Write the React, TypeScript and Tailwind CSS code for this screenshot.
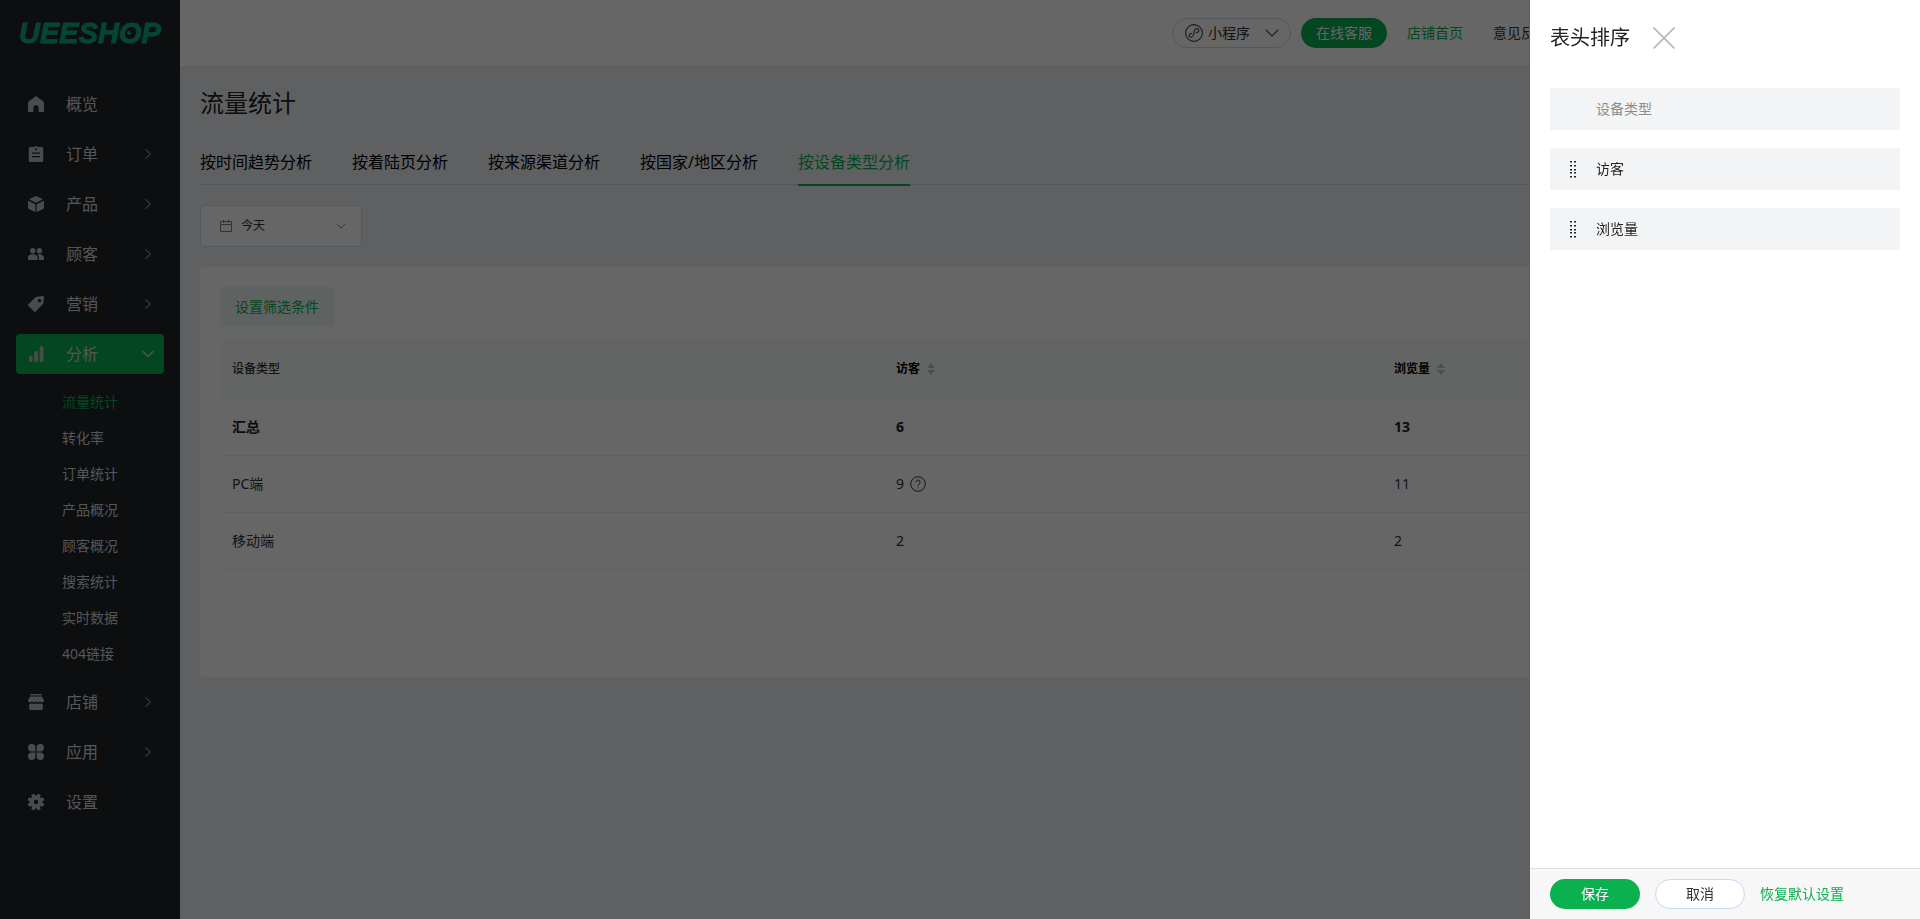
import { useState } from 'react'
import type { ReactNode } from 'react'
import { ChevronDown, ChevronRight } from 'lucide-react'

type MenuItem = {
  name: string
  icon: ReactNode
  arrow?: boolean
  children?: string[]
}

const svgProps = {
  viewBox: '0 0 16 16',
  fill: 'currentColor',
  className: 'w-4 h-4',
  'aria-hidden': true,
}

const menu: MenuItem[] = [
  {
    name: '概览',
    icon: (
      <svg {...svgProps}>
        <path d="M8 0 15.3 5.6c.4.3.7.8.7 1.3V15a1 1 0 0 1-1 1h-4.400v-4.200a2.600 2.600 0 0 0-5.200 0V16H1a1 1 0 0 1-1-1V6.900c0-.5.3-1 .7-1.300z" />
      </svg>
    ),
  },
  {
    name: '订单',
    arrow: true,
    icon: (
      <svg {...svgProps}>
        <path
          fillRule="evenodd"
          d="M5.400 1 8 0l2.600 1H14a1.200 1.200 0 0 1 1.200 1.200v12.600A1.200 1.200 0 0 1 14 16H2a1.200 1.200 0 0 1-1.200-1.200V2.200A1.200 1.200 0 0 1 2 1zM8 2.200a1 1 0 1 0 0 2 1 1 0 0 0 0-2zM4 6.500v1.300h8V6.500zM4 10v1.300h8V10z"
        />
      </svg>
    ),
  },
  {
    name: '产品',
    arrow: true,
    icon: (
      <svg {...svgProps}>
        <path d="M8 0 15 3.300 8 6.800 1 3.300zM0 4.700l7.400 3.600V16L.7 12.900a1.200 1.200 0 0 1-.7-1zM16 4.700 8.600 8.300V16l6.700-3.100a1.200 1.200 0 0 0 .7-1z" />
      </svg>
    ),
  },
  {
    name: '顾客',
    arrow: true,
    icon: (
      <svg {...svgProps}>
        <circle cx="4.800" cy="4.800" r="2.700" />
        <circle cx="11.400" cy="4.800" r="2.700" />
        <path d="M0 14v-2.200a4 4 0 0 1 4-3.600h1.400c2.300 0 4 1.500 4.400 3.600V14zM11 14v-2.200c-.1-1.300-.8-2.600-1.700-3.400.6-.2 1.200-.2 2.100-.2 2.600 0 4.300 1.400 4.600 3.600V14z" />
      </svg>
    ),
  },
  {
    name: '营销',
    arrow: true,
    icon: (
      <svg {...svgProps}>
        <path
          fillRule="evenodd"
          d="M8.700.7 15 0a1 1 0 0 1 1 1l-.6 6.300c0 .3-.2.600-.4.800l-7.300 7.500a1.200 1.200 0 0 1-1.700 0L.4 10a1.200 1.200 0 0 1 0-1.700L7.900 1.100c.2-.2.5-.4.8-.4zM11.400 3a1.800 1.800 0 1 0 0 3.600 1.800 1.800 0 0 0 0-3.600z"
        />
      </svg>
    ),
  },
  {
    name: '分析',
    icon: (
      <svg {...svgProps}>
        <rect x="1" y="9.500" width="3.600" height="6.500" rx="1.600" />
        <rect x="6.200" y="5" width="3.800" height="11" rx="1.600" />
        <rect x="11.700" y="0" width="3.800" height="16" rx="1.600" />
      </svg>
    ),
    children: ['流量统计', '转化率', '订单统计', '产品概况', '顾客概况', '搜索统计', '实时数据', '404链接'],
  },
  {
    name: '店铺',
    arrow: true,
    icon: (
      <svg {...svgProps}>
        <path d="M2.200 0h11.600v1.400H2.200zM2 2.600h12l2 4c0 1.100-.8 1.900-2 1.900s-1.700-.6-2-1.200c-.4.700-1 1.200-2 1.200S8.300 8 8 7.300C7.700 8 7 8.500 6 8.500S4.400 8 4 7.300c-.3.600-1 1.200-2 1.200S0 7.700 0 6.600zM1.200 9.900c1 .2 2 0 2.800-.6 1.200.8 2.800.8 4 0 1.200.8 2.800.8 4 0 .8.600 1.800.8 2.800.6V15a1 1 0 0 1-1 1H2.200a1 1 0 0 1-1-1z" />
      </svg>
    ),
  },
  {
    name: '应用',
    arrow: true,
    icon: (
      <svg {...svgProps}>
        <path d="M3.700 0a3.700 3.700 0 0 1 3.700 3.700v3.700H3.700a3.700 3.700 0 0 1 0-7.400zM12.300 0a3.700 3.700 0 0 1 0 7.400H8.600V3.700A3.700 3.700 0 0 1 12.300 0zM3.700 8.600h3.700v3.700a3.700 3.700 0 1 1-3.700-3.700zM8.600 8.600h3.700a3.700 3.700 0 1 1-3.700 3.700z" />
      </svg>
    ),
  },
  {
    name: '设置',
    icon: (
      <svg {...svgProps}>
        <circle cx="8" cy="8" r="4.300" fill="none" stroke="currentColor" strokeWidth="4.200" />
        {[22.5, 67.5, 112.5, 157.5, 202.5, 247.5, 292.5, 337.5].map((deg) => (
          <rect key={deg} x="6.300" y="-.4" width="3.400" height="3.400" rx=".8" transform={`rotate(${deg} 8 8)`} />
        ))}
      </svg>
    ),
  },
]

const tabs = ['按时间趋势分析', '按着陆页分析', '按来源渠道分析', '按国家/地区分析', '按设备类型分析']

const rows = [
  { type: 'PC端', visitors: 9, views: 11, tip: true },
  { type: '移动端', visitors: 2, views: 2, tip: false },
]

function Logo() {
  return (
    <svg viewBox="0 0 150 44" className="w-[150px] h-11" role="img" aria-label="UEESHOP">
      <text
        x="0"
        y="33"
        fill="#0cb080"
        stroke="#0cb080"
        strokeWidth=".8"
        fontFamily="'Liberation Sans', Arial, sans-serif"
        fontSize="29"
        fontWeight="700"
        fontStyle="italic"
      >
        UEESHOP
      </text>
      <circle cx="110" cy="23" r="2" fill="#0cb080" />
    </svg>
  )
}

function CalendarIcon() {
  return (
    <svg viewBox="0 0 12 12" className="w-3 h-3" fill="none" stroke="#7c818c" aria-hidden="true">
      <path d="M.5 1.500h11v10H.5zM.5 4.500h11M3.500 0v3M8.500 0v3" />
    </svg>
  )
}

function SortIcon() {
  return (
    <svg viewBox="0 0 8 12" className="w-2 h-3" fill="#c0c4cc" aria-hidden="true">
      <path d="M4 0 8 5H0zM4 12 0 7h8z" />
    </svg>
  )
}

function DragIcon() {
  return (
    <svg viewBox="0 0 6 17" className="w-[6px] h-[17px]" fill="#222" aria-hidden="true">
      {[0, 4, 8, 11, 15].map((y) => (
        <g key={y}>
          <rect x="0" y={y} width="2" height="1.500" />
          <rect x="4" y={y} width="2" height="1.500" />
        </g>
      ))}
    </svg>
  )
}

function Sidebar() {
  return (
    <aside className="w-[180px] shrink-0 bg-[#202328] text-[#d5d6d8]">
      <div className="h-[84px] pt-[10px] pl-[19px]">
        <Logo />
      </div>
      <nav className="px-4">
        <ul className="flex flex-col gap-[10px]">
          {menu.map((item) => (
            <li key={item.name}>
              <a
                href="#"
                className={
                  item.children
                    ? 'flex h-10 items-center rounded bg-[#0bb04f] pl-3 pr-[6px] text-base'
                    : 'flex h-10 items-center rounded pl-3 pr-[7px] text-base'
                }
              >
                <span className="text-[#b9bbbe]">{item.icon}</span>
                <span className="ml-[22px] flex-1">{item.name}</span>
                {item.arrow && <ChevronRight className="w-[18px] h-[18px] text-[#85878b]" strokeWidth={1.5} />}
                {item.children && <ChevronDown className="w-5 h-5" strokeWidth={1.5} />}
              </a>
              {item.children && (
                <ul className="pt-[10px] pl-[46px] text-sm">
                  {item.children.map((child, i) => (
                    <li key={child}>
                      <a
                        href="#"
                        className={
                          i === 0 ? 'flex h-9 items-center text-[#0bb04f]' : 'flex h-9 items-center'
                        }
                      >
                        {child}
                      </a>
                    </li>
                  ))}
                </ul>
              )}
            </li>
          ))}
        </ul>
      </nav>
    </aside>
  )
}

function Header() {
  return (
    <header className="flex h-[67px] items-center justify-end border-b border-[#e4e5e9] bg-white pr-[371px] text-sm">
      <button type="button" className="flex h-[30px] w-[119px] items-center rounded-full border border-[#ccdced] pl-3 text-[#333]">
        <svg viewBox="0 0 18 18" className="w-[18px] h-[18px]" fill="none" stroke="#444" strokeWidth="1.100" aria-hidden="true">
          <circle cx="9" cy="9" r="8.400" />
          <path
            strokeLinecap="round"
            d="M11.300 8.900c1.600-.4 2.600-1.400 2.400-2.700-.2-1.200-1.500-2-2.800-1.500C9.600 5.200 9.500 6.300 9.100 8l-.4 2c-.3 1.600-.9 2.900-2.300 3.200-1.200.2-2.200-.6-2.200-1.700 0-1.200 1-2 2.300-2.300"
          />
        </svg>
        <span className="ml-[5px]">小程序</span>
        <ChevronDown className="ml-[10px] w-6 h-6 text-[#66676b]" strokeWidth={1.25} />
      </button>
      <a href="#" className="ml-[10px] flex h-[30px] items-center rounded-full bg-[#0bb04f] px-[15px] text-white">
        在线客服
      </a>
      <a href="#" className="ml-5 text-[#0bb04f]">
        店铺首页
      </a>
      <a href="#" className="ml-[30px] text-[#333]">
        意见反馈
      </a>
    </header>
  )
}

function StatsTable() {
  return (
    <table className="mt-3 w-full table-fixed text-left text-sm text-[#333]">
      <thead className="text-xs">
        <tr className="h-[60px] bg-[#f8fcfa]">
          <th className="w-[40%] px-3 font-medium">设备类型</th>
          {['访客', '浏览量'].map((name) => (
            <th key={name} className="w-[30%] px-3 font-bold text-black">
              <button type="button" className="flex items-center gap-[7px]">
                {name}
                <SortIcon />
              </button>
            </th>
          ))}
        </tr>
      </thead>
      <tbody>
        <tr className="h-14 border-b border-[#edf0f5] font-bold text-[#222]">
          <td className="px-3">汇总</td>
          <td className="px-3">6</td>
          <td className="px-3">13</td>
        </tr>
        {rows.map((row) => (
          <tr key={row.type} className="h-[57px] border-b border-[#edf0f5]">
            <td className="px-3">{row.type}</td>
            <td className="px-3">
              <div className="flex items-center gap-[6px]">
                {row.visitors}
                {row.tip && (
                  <svg viewBox="0 0 16 16" className="w-4 h-4" fill="none" stroke="#333" aria-hidden="true">
                    <circle cx="8" cy="8" r="7.300" />
                    <path d="M5.900 6.200a2.100 2.100 0 1 1 3.300 1.700C8.400 8.400 8 8.900 8 9.900M8 11.200v1.200" />
                  </svg>
                )}
              </div>
            </td>
            <td className="px-3">{row.views}</td>
          </tr>
        ))}
      </tbody>
    </table>
  )
}

function SortDrawer({ onClose }: { onClose: () => void }) {
  return (
    <div
      role="dialog"
      aria-labelledby="drawer-title"
      className="fixed inset-y-0 right-0 z-20 flex w-[390px] flex-col bg-white text-sm text-[#222] shadow-[-1px_0_0_#52626e]"
    >
      <div className="flex h-[76px] items-center gap-[23px] px-5">
        <h2 id="drawer-title" className="text-xl">
          表头排序
        </h2>
        <button type="button" aria-label="关闭" onClick={onClose}>
          <svg viewBox="0 0 22 22" className="w-[22px] h-[22px]" stroke="#b9b9b9" strokeWidth="1.700" aria-hidden="true">
            <path d="M.5.5l21 21M21.500.5l-21 21" />
          </svg>
        </button>
      </div>
      <ul className="flex flex-1 flex-col gap-[18px] px-5 pt-3">
        <li className="flex h-[42px] items-center bg-[#f3f4f6] pl-[46px] text-[#8c8c8c]">设备类型</li>
        {['访客', '浏览量'].map((name) => (
          <li key={name} className="flex h-[42px] cursor-move items-center gap-5 bg-[#f3f4f6] pl-5">
            <DragIcon />
            {name}
          </li>
        ))}
      </ul>
      <div className="flex h-[51px] items-center border-t border-[#dedfe0] bg-[#f7f7f7] px-5">
        <button type="button" className="h-[30px] w-[90px] rounded-full bg-[#0bb04f] text-white">
          保存
        </button>
        <button
          type="button"
          onClick={onClose}
          className="ml-[15px] h-[30px] w-[90px] rounded-full border border-[#c5d9f1] bg-white text-[#333]"
        >
          取消
        </button>
        <button type="button" className="ml-[15px] text-[#0bb04f]">
          恢复默认设置
        </button>
      </div>
    </div>
  )
}

export default function App() {
  const [drawerOpen, setDrawerOpen] = useState(true)

  return (
    <div className="flex min-h-screen bg-[#eef0f5] font-['Noto_Sans','Noto_Sans_CJK_SC',sans-serif]">
      <Sidebar />

      <div className="min-w-0 flex-1">
        <Header />
        <main className="px-5">
          <h1 className="pt-[18px] text-2xl leading-9 text-[#222]">流量统计</h1>

          {/* 分析维度 */}
          <nav className="mt-[18px] flex h-[46px] gap-10 border-b border-[#d5d8de] text-base text-black">
            {tabs.map((tab, i) => (
              <a
                key={tab}
                href="#"
                className={
                  i === tabs.length - 1
                    ? '-mb-[2px] flex items-center border-b-2 border-[#0bb04f] text-[#0bb04f]'
                    : 'flex items-center'
                }
              >
                {tab}
              </a>
            ))}
          </nav>

          <button
            type="button"
            className="mt-5 flex h-[42px] w-[162px] items-center rounded border border-[#ccdced] bg-white pl-[19px] pr-3 text-xs text-[#333]"
          >
            <CalendarIcon />
            <span className="ml-[9px] flex-1 text-left">今天</span>
            <ChevronDown className="w-4 h-4 text-[#8a8f99]" strokeWidth={1.5} />
          </button>

          <section className="mt-5 rounded bg-white px-5 pt-5 pb-[107px]">
            <button type="button" className="h-10 rounded bg-[#ecf6f2] px-[15px] text-sm text-[#0bb04f]">
              设置筛选条件
            </button>
            <StatsTable />
          </section>
        </main>
      </div>

      {drawerOpen && (
        <>
          <div className="fixed inset-0 z-10 bg-black/60" />
          <SortDrawer onClose={() => setDrawerOpen(false)} />
        </>
      )}
    </div>
  )
}
